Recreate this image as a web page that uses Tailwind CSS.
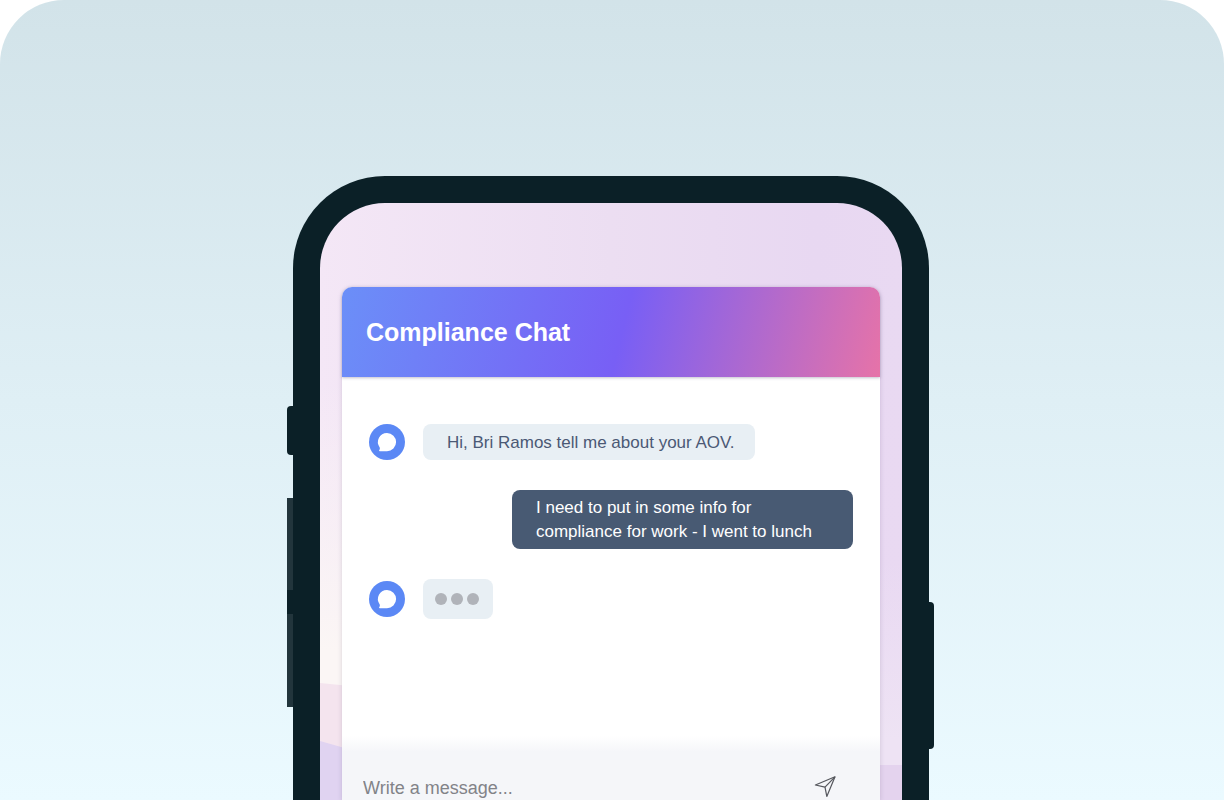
<!DOCTYPE html>
<html lang="en">
  <head>
    <meta charset="UTF-8" />
    <meta name="viewport" content="width=device-width, initial-scale=1.0" />
    <title>Compliance Chat</title>
    <script src="https://cdn.jsdelivr.net/npm/@tailwindcss/browser@4"></script>
    <style>
      body {
        font-family: "Liberation Sans", Arial, sans-serif;
      }
    </style>
  </head>
  <body class="bg-white">
    <main class="flex h-screen flex-col items-center overflow-hidden rounded-t-[64px] bg-linear-to-b from-[#d2e3e9] via-[#dfeff5] to-[#ebfaff] pt-44 pr-0.5">
      <!-- Phone -->
      <div class="relative flex w-full max-w-[636px] flex-1 flex-col rounded-t-[92px] border-27 border-b-0 border-[#0b2027] bg-[#0b2027]">
        <!-- Side buttons -->
        <span class="absolute top-[203px] -left-[33px] h-[49px] w-1.5 rounded-l-sm bg-[#0b2027]"></span>
        <span class="absolute top-[295px] -left-[33px] h-[92px] w-1.5 bg-[#22353c]"></span>
        <span class="absolute top-[387px] -left-[33px] h-6 w-1.5 bg-[#0b2027]"></span>
        <span class="absolute top-[411px] -left-[33px] h-[93px] w-1.5 bg-[#22353c]"></span>
        <span class="absolute top-[399px] -right-8 h-[147px] w-1.5 rounded-r-sm bg-[#0b2027]"></span>

        <!-- Screen -->
        <div class="relative flex flex-1 flex-col overflow-hidden rounded-t-[65px] px-[22px] pt-[84px]">
          <svg class="absolute inset-0 h-full w-full" viewBox="0 0 582 597" preserveAspectRatio="none" aria-hidden="true">
            <defs>
              <linearGradient id="wall" x1="0" y1="0" x2="1" y2="0">
                <stop offset="0" stop-color="#f4e7f6" />
                <stop offset="0.5" stop-color="#ecdef2" />
                <stop offset="0.85" stop-color="#e8d8f2" />
                <stop offset="1" stop-color="#e9d9f2" />
              </linearGradient>
              <linearGradient id="glow" x1="0" y1="0" x2="0" y2="1">
                <stop offset="0.3" stop-color="#fbf6f5" stop-opacity="0" />
                <stop offset="0.75" stop-color="#fbf6f5" />
              </linearGradient>
              <linearGradient id="glowRight" x1="0" y1="0" x2="0" y2="1">
                <stop offset="0.6" stop-color="#eee3f4" stop-opacity="0" />
                <stop offset="0.9" stop-color="#eee3f4" />
              </linearGradient>
            </defs>
            <rect width="582" height="597" fill="url(#wall)" />
            <rect width="60" height="597" fill="url(#glow)" />
            <rect x="522" width="60" height="597" fill="url(#glowRight)" />
            <path d="M0 480 L60 486 V597 H0 Z" fill="#f4e4ee" />
            <path d="M0 538 L60 555 V597 H0 Z" fill="#e0d3f1" />
            <path d="M522 562 H582 V597 H522 Z" fill="#e4d3ee" />
          </svg>

          <!-- Chat window -->
          <section class="relative flex flex-1 flex-col rounded-t-[10px] bg-white shadow-[0_1px_5px_rgba(60,50,90,0.18)]">
            <header class="rounded-t-[10px] bg-[linear-gradient(104deg,#6b8ff8_0%,#785ff5_52%,#e673a8_100%)] px-6 py-[27px] shadow-[0_1px_3px_rgba(60,50,90,0.3)]">
              <h1 class="text-[25px] leading-9 font-bold text-white">Compliance Chat</h1>
            </header>

            <ul class="flex flex-1 flex-col gap-[30px] px-[27px] pt-[47px] text-[17px]">
              <li class="flex items-center gap-[18px]">
                <svg class="size-9 shrink-0" viewBox="0 0 36 36" aria-hidden="true">
                  <circle cx="18" cy="18" r="18" fill="#5b88f5" />
                  <path d="M18 9a9 9 0 1 1 0 18.2h-7.2c-.8 0-.9-.6-.5-1.1.6-.8.8-1.8.3-2.9A9 9 0 0 1 18 9z" fill="#fff" />
                </svg>
                <p class="rounded-lg bg-[#e8eff4] pt-[7px] pr-5 pb-[5px] pl-6 leading-6 text-[#4b5975]">Hi, Bri Ramos tell me about your AOV.</p>
              </li>
              <li class="flex justify-end">
                <p class="w-[341px] rounded-lg bg-[#485a73] px-6 pt-1.5 pb-[5px] leading-6 text-white">I need to put in some info for compliance for work - I went to lunch</p>
              </li>
              <li class="flex items-center gap-[18px]">
                <svg class="size-9 shrink-0" viewBox="0 0 36 36" aria-hidden="true">
                  <circle cx="18" cy="18" r="18" fill="#5b88f5" />
                  <path d="M18 9a9 9 0 1 1 0 18.2h-7.2c-.8 0-.9-.6-.5-1.1.6-.8.8-1.8.3-2.9A9 9 0 0 1 18 9z" fill="#fff" />
                </svg>
                <div class="flex h-10 items-center gap-1 rounded-lg bg-[#e8eff4] pr-3.5 pl-3" role="status" aria-label="Typing">
                  <span class="size-3 rounded-full bg-[#b0b3b9]"></span>
                  <span class="size-3 rounded-full bg-[#b0b3b9]"></span>
                  <span class="size-3 rounded-full bg-[#b0b3b9]"></span>
                </div>
              </li>
            </ul>

            <!-- Composer -->
            <div class="h-4 bg-linear-to-b from-white to-[#f5f6f9]"></div>
            <form class="flex items-start bg-[#f5f6f9] pt-6 pr-11 pl-[21px]">
              <input type="text" aria-label="Message" placeholder="Write a message..." class="h-6 min-w-0 flex-1 bg-transparent text-[18px] text-[#4b5975] outline-none placeholder:text-[#828388]" />
              <button type="button" aria-label="Send">
                <svg class="size-[22px]" viewBox="0 0 22 22" fill="none" stroke="#55575d" stroke-width="1.2" stroke-linejoin="round">
                  <path d="M21 .8 1.4 9l9.6 2.2 1.8 9.2z" />
                  <path d="M21 .8 11 11.2" />
                </svg>
              </button>
            </form>
          </section>
        </div>
      </div>
    </main>
  </body>
</html>
